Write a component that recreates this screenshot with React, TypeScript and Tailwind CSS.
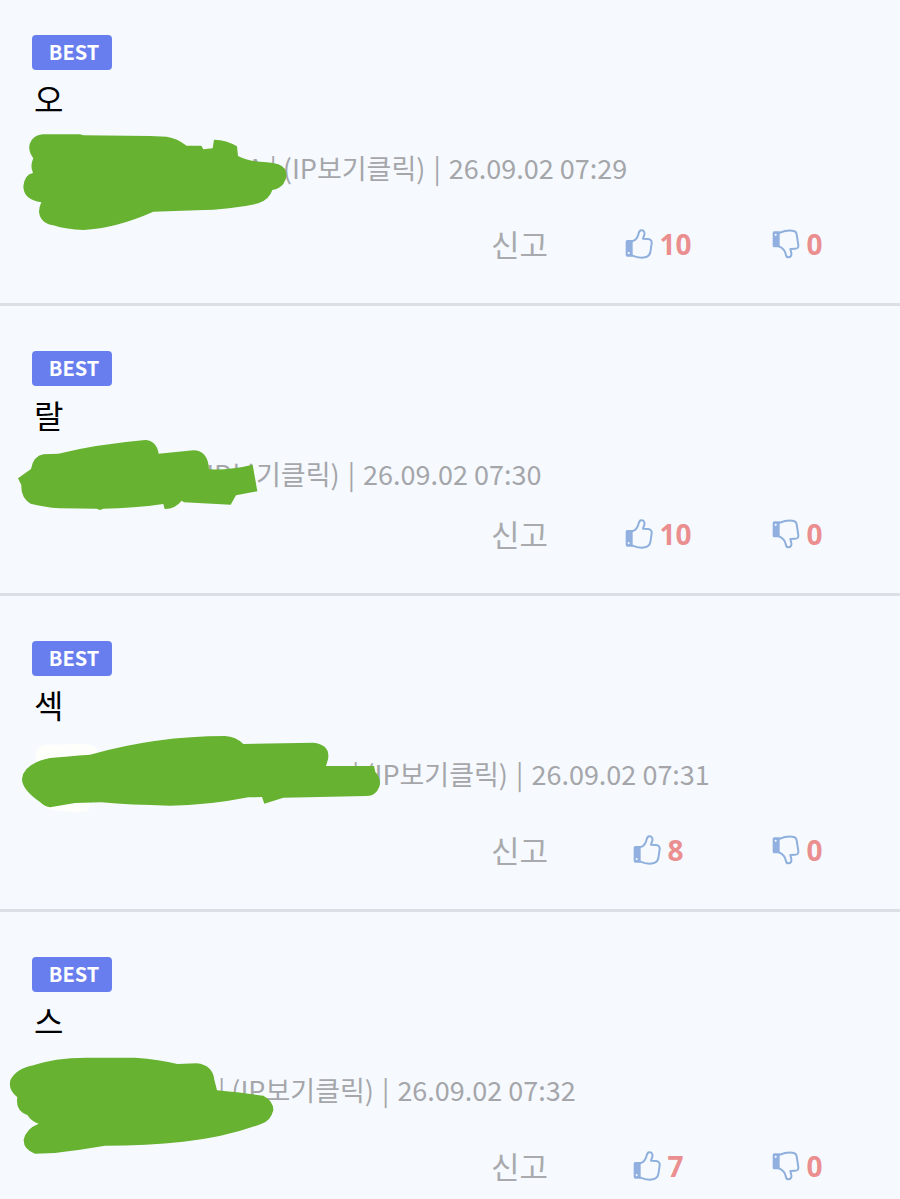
import React from "react";

interface Comment {
  id: number;
  text: string;
  tail: string;
  date: string;
  likes: number;
  dislikes: number;
  indent: string;
  compact?: boolean;
  viewBox: string;
  scribble: string;
  smudge?: string;
}

const comments: Comment[] = [
  {
    id: 1,
    text: "오",
    tail: "A | (IP보기클릭)",
    date: "26.09.02 07:29",
    likes: 10,
    dislikes: 0,
    indent: "pl-[215px]",
    viewBox: "0 265 1200 360",
    scribble:
      "M130 344 L240 344 L250 347 L450 349 L500 351 Q532 356 560 378 L604 378 L610 389 L638 386 L642 360 Q680 361 711 380 L714 409 Q745 426 800 428 Q842 430 855 448 Q866 470 850 493 Q838 508 817 511 Q808 540 775 551 Q700 569 590 572 L460 576 Q350 625 250 631 Q200 630 160 617 Q121 611 117 576 Q118 560 124 548 Q70 540 70 500 Q74 464 99 460 Q89 438 100 416 Q78 386 95 361 Q108 345 130 344 Z",
  },
  {
    id: 2,
    text: "랄",
    tail: "(IP보기클릭)",
    date: "26.09.02 07:30",
    likes: 10,
    dislikes: 0,
    indent: "pl-[165px]",
    compact: true,
    viewBox: "0 222 1200 360",
    scribble:
      "M130 343 L175 341 Q290 313 435 300 Q470 302 476 341 L580 331 Q624 332 627 388 Q690 391 758 374 L772 454 L708 466 L692 494 L552 487 L545 482 Q524 508 494 507 L490 492 Q400 505 310 506 L300 510 L290 506 L180 505 Q130 501 92 491 Q62 474 64 435 L54 415 L93 387 Q100 348 130 343 Z",
  },
  {
    id: 3,
    text: "섹",
    tail: "0 | (IP보기클릭)",
    date: "26.09.02 07:31",
    likes: 8,
    dislikes: 0,
    indent: "pl-[299px]",
    viewBox: "0 252 1200 360",
    smudge:
      "M108 378 Q105 350 135 344 L245 342 Q280 344 292 357 L290 390 L110 410 Z M120 515 L270 510 L265 543 Q200 551 140 535 Z",
    scribble:
      "M150 384 Q200 379 270 374 Q470 318 675 318 Q708 320 730 342 L940 338 Q992 344 984 388 L978 408 L1122 408 L1126 426 Q1145 446 1138 470 Q1128 497 1100 498 L850 503 L793 521 L786 501 L745 502 Q620 527 510 527 Q390 525 305 517 L225 519 L150 532 Q135 531 120 516 Q66 479 66 447 Q70 401 150 384 Z",
  },
  {
    id: 4,
    text: "스",
    tail: "| (IP보기클릭)",
    date: "26.09.02 07:32",
    likes: 7,
    dislikes: 0,
    indent: "pl-[186px]",
    viewBox: "0 269 1200 360",
    scribble:
      "M100 375 Q160 353 260 352 L405 352 Q480 357 532 371 L590 369 Q638 374 643 418 L651 450 Q750 460 790 466 Q821 483 820 510 Q812 542 785 550 Q680 590 550 604 Q440 616 315 616 Q230 630 165 638 L105 640 Q70 627 71 598 Q78 565 116 550 Q93 543 83 525 Q45 512 52 471 Q24 449 31 420 Q47 386 100 375 Z",
  },
];

function ThumbUp() {
  return (
    <svg
      viewBox="44 24 84 90"
      className="h-[30px] w-7 shrink-0"
      fill="none"
      aria-hidden="true"
    >
      <path
        d="M51 57 H67 V107 H51 Q46 107 46 101 V62 Q46 57 51 57 Z M55 93 a3 3 0 1 0 0.1 0 Z"
        fill="#91b0e0"
        fillRule="evenodd"
      />
      <path
        d="M64 61 C73 59 79 53 82 46 C86 38 85 29 92 28 C103 27 104 37 101 44 L98 53 L113 54 C121 55 125 60 124 67 L120 94 C118 103 113 107 104 109 C92 112 78 109 64 103"
        stroke="#8fb0dc"
        strokeWidth="6"
        strokeLinecap="round"
        strokeLinejoin="round"
      />
    </svg>
  );
}

function ThumbDown() {
  return (
    <svg
      viewBox="36 30 84 90"
      className="h-[30px] w-7 shrink-0"
      fill="none"
      aria-hidden="true"
    >
      <path
        d="M43 37 H59 V85 H43 Q38 85 38 80 V42 Q38 37 43 37 Z M47 44 a3 3 0 1 0 0.1 0 Z"
        fill="#91b0e0"
        fillRule="evenodd"
      />
      <path
        d="M57 42 C70 37 88 33 101 36 C106 37 109 40 110 46 L115 78 C116 86 112 89 105 89 L91 90 L94 102 C95 110 92 115 85 115 C79 115 78 111 77 105 C75 94 68 87 57 82"
        stroke="#8fb0dc"
        strokeWidth="6"
        strokeLinecap="round"
        strokeLinejoin="round"
      />
    </svg>
  );
}

function CommentItem({ comment }: { comment: Comment }) {
  return (
    <li className="border-b-[3px] border-[#dcdfe6] px-8 pt-[45px] pb-[41px] first:pt-[35px] last:border-b-0 last:pb-4">
      <span className="flex h-[35px] w-20 justify-center rounded bg-[#697eee] pl-1 text-[20px] leading-[34px] font-bold text-white">
        BEST
      </span>
      <p className="mt-2 h-10 pl-0.5 text-[32px] leading-10 text-black">
        {comment.text}
      </p>

      <div
        className={`relative h-9 text-[27px] leading-9 whitespace-nowrap text-[#a5a6aa] ${
          comment.compact ? "mt-[22px] mb-6" : "mt-8 mb-10"
        } ${comment.indent}`}
      >
        {comment.tail} <span className="mx-0.5">|</span>{" "}
        <time>{comment.date}</time>
        <svg
          viewBox={comment.viewBox}
          className="absolute top-1/2 -left-8 h-[120px] w-[400px] -translate-y-1/2 overflow-visible"
          aria-hidden="true"
        >
          {comment.smudge && <path d={comment.smudge} fill="#fefffb" />}
          <path d={comment.scribble} fill="#67b230" />
        </svg>
      </div>

      <div className="flex h-9 justify-end pr-px">
        <button className="w-[139px] cursor-pointer text-[31px] leading-9 text-[#a9aaad]">
          신고
        </button>
        <button
          aria-label="추천"
          className="flex w-[139px] cursor-pointer items-center justify-center gap-1.5"
        >
          <ThumbUp />
          <Count value={comment.likes} />
        </button>
        <button
          aria-label="비추천"
          className="flex w-[139px] cursor-pointer items-center justify-center gap-1.5"
        >
          <ThumbDown />
          <Count value={comment.dislikes} />
        </button>
      </div>
    </li>
  );
}

function Count({ value }: { value: number }) {
  return (
    <span className="font-['Noto_Sans',sans-serif] text-[28px] leading-9 font-bold text-[#ea8e90]">
      {value}
    </span>
  );
}

function App() {
  return (
    <main className="min-h-screen bg-[#f6faff] font-['Noto_Sans_CJK_KR',sans-serif]">
      <ul>
        {comments.map((comment) => (
          <CommentItem key={comment.id} comment={comment} />
        ))}
      </ul>
    </main>
  );
}

export default App;
